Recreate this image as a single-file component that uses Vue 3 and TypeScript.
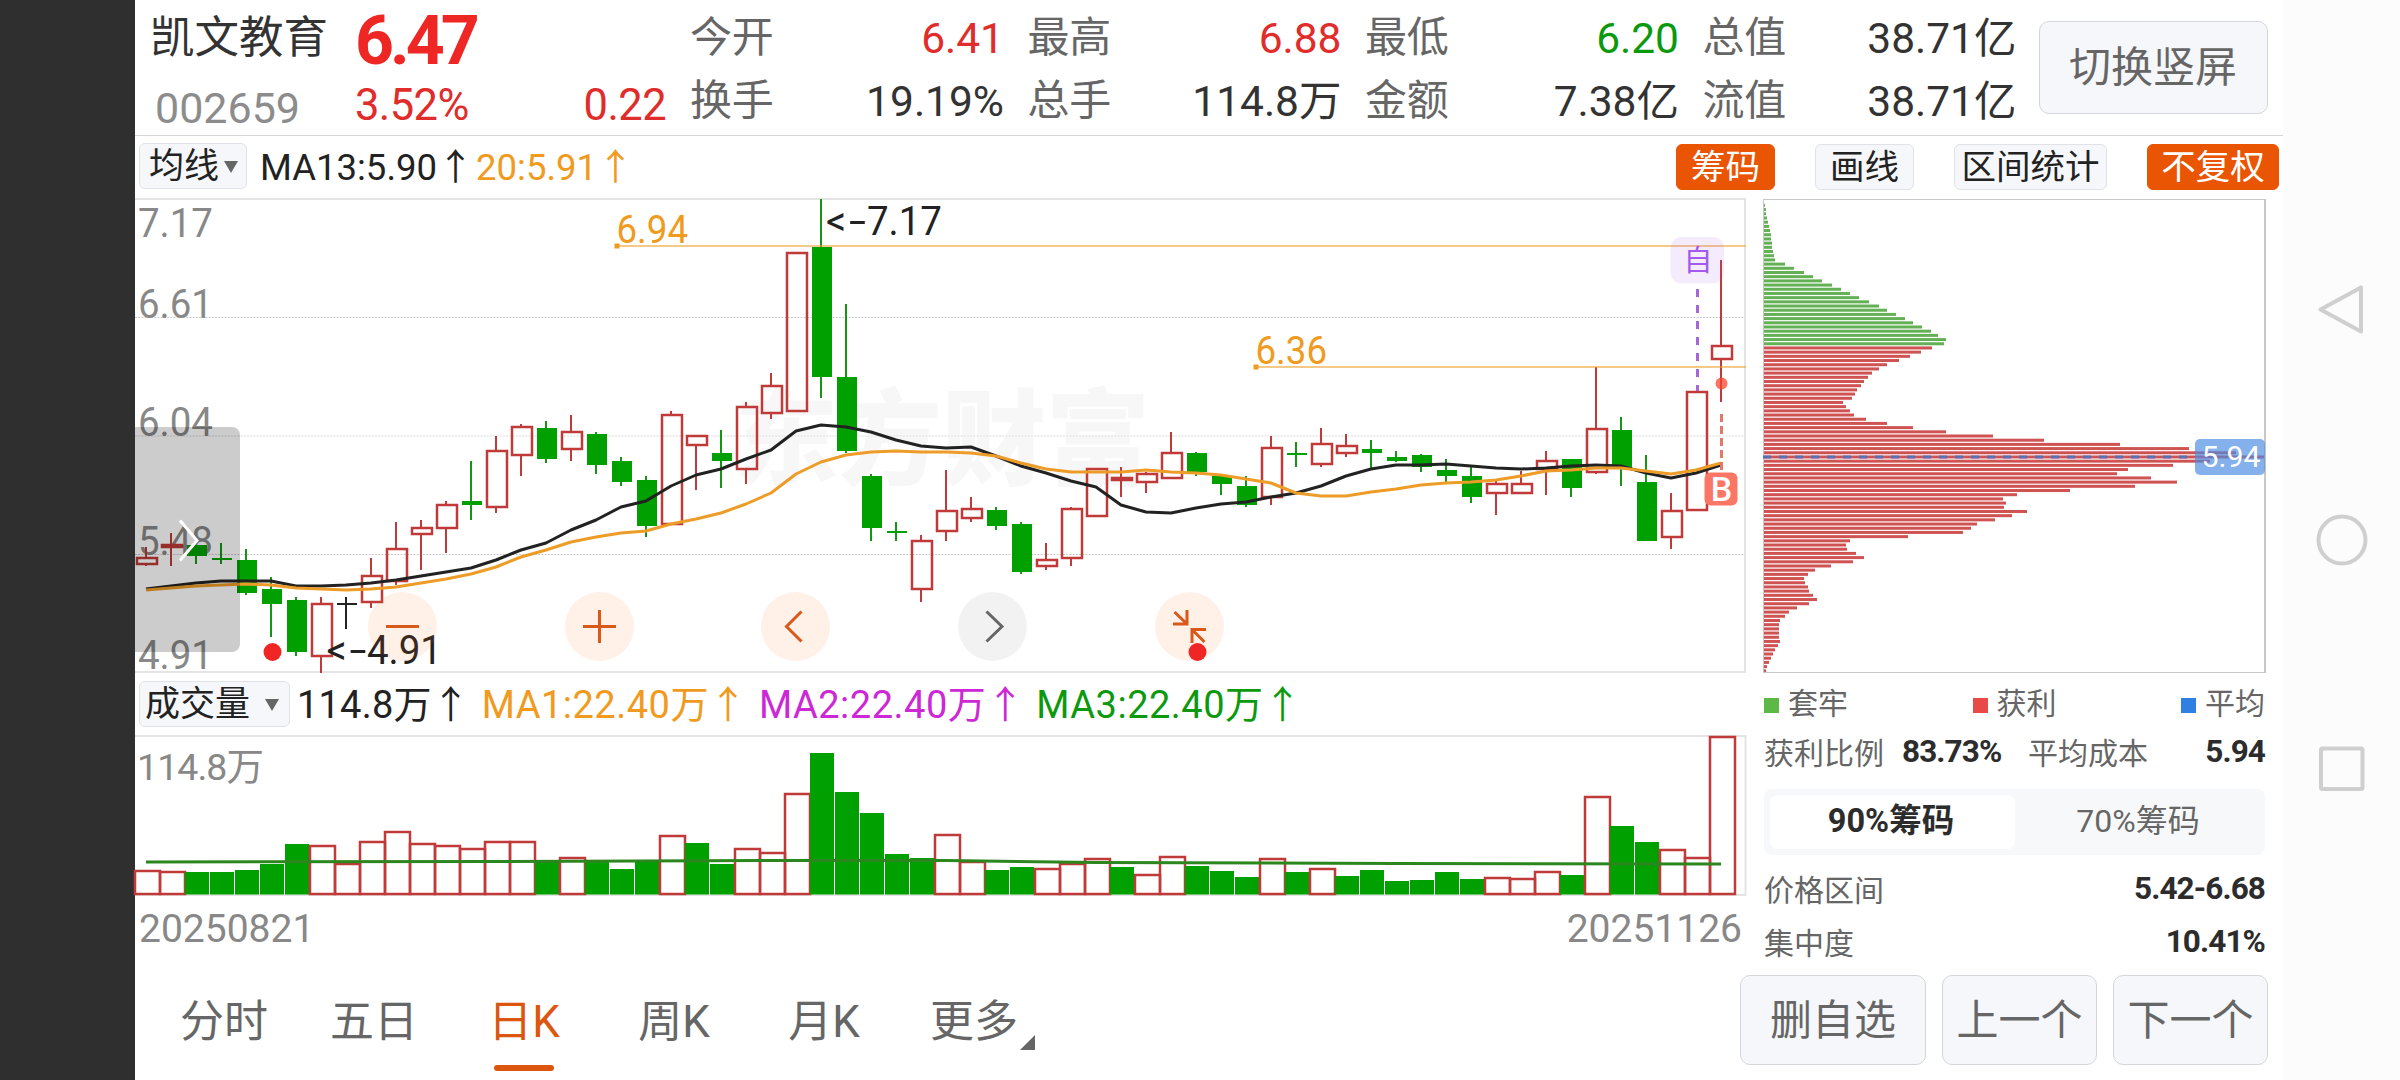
<script setup lang="ts">
type Tone = 'r' | 'g' | 'k'
type Candle = [Tone, number, number, number, number]

const STEP = 25
const FIRST = 146

// tone, high, body top, body bottom, low
const candles: Candle[] = [
  ['r', 547, 557, 565, 566], ['r', 533, 544, 548, 566], ['g', 545, 545, 556, 564], ['g', 543, 558, 560, 564],
  ['g', 549, 560, 593, 595], ['g', 577, 589, 604, 637], ['g', 597, 600, 652, 656], ['r', 597, 603, 657, 673],
  ['k', 597, 603, 605, 629], ['r', 558, 575, 603, 608], ['r', 522, 548, 582, 585], ['r', 520, 527, 535, 570],
  ['r', 501, 504, 529, 553], ['g', 461, 501, 505, 520], ['r', 436, 450, 508, 513], ['r', 424, 426, 456, 476],
  ['g', 421, 428, 459, 463], ['r', 415, 431, 450, 461], ['g', 432, 434, 465, 474], ['g', 457, 461, 482, 486],
  ['g', 476, 480, 526, 537], ['r', 411, 414, 525, 525], ['r', 435, 435, 446, 490], ['g', 430, 453, 461, 488],
  ['r', 402, 406, 470, 484], ['r', 373, 385, 414, 419], ['r', 252, 252, 412, 412], ['g', 199, 247, 377, 398],
  ['g', 304, 377, 451, 453], ['g', 474, 476, 528, 541], ['g', 522, 531, 533, 541], ['r', 535, 540, 590, 602],
  ['r', 470, 510, 532, 541], ['r', 497, 508, 519, 522], ['g', 507, 510, 526, 530], ['g', 522, 524, 572, 574],
  ['r', 543, 559, 567, 570], ['r', 507, 508, 559, 566], ['r', 468, 468, 517, 517], ['r', 467, 477, 481, 497],
  ['r', 472, 473, 483, 493], ['r', 432, 452, 479, 479], ['g', 452, 453, 472, 476], ['g', 474, 476, 484, 495],
  ['g', 476, 486, 505, 507], ['r', 436, 447, 498, 505], ['g', 442, 453, 455, 467], ['r', 428, 443, 465, 467],
  ['r', 434, 445, 454, 457], ['g', 440, 449, 453, 468], ['g', 451, 457, 461, 462], ['g', 454, 455, 467, 472],
  ['g', 459, 470, 476, 483], ['g', 467, 476, 497, 503], ['r', 480, 483, 494, 515], ['r', 471, 483, 494, 494],
  ['r', 451, 460, 470, 495], ['g', 459, 459, 488, 497], ['r', 367, 428, 473, 474], ['g', 417, 430, 469, 486],
  ['g', 455, 482, 541, 541], ['r', 493, 510, 538, 549], ['r', 391, 391, 511, 511], ['r', 260, 345, 360, 402],
]

const ma13: number[] = [
  589, 586, 583, 581, 581, 581, 586, 586, 585, 583, 580, 576, 572, 568, 560, 550, 543, 530, 520, 507, 501, 486, 475, 469,
  459, 450, 431, 425, 427, 432, 440, 446, 448, 447, 456, 466, 473, 481, 487, 505, 512, 513, 508, 504, 502, 497, 493, 486,
  476, 469, 465, 465, 464, 466, 468, 469, 468, 466, 465, 466, 473, 478, 473, 465,
]
const ma20: number[] = [
  590, 588, 586, 585, 584, 585, 588, 589, 590, 589, 587, 583, 579, 574, 567, 557, 550, 542, 537, 533, 531, 524, 519, 513,
  504, 493, 474, 462, 455, 452, 451, 452, 452, 453, 456, 463, 469, 472, 472, 472, 470, 472, 473, 475, 479, 483, 493, 496,
  496, 492, 489, 485, 483, 482, 480, 476, 471, 470, 468, 468, 471, 474, 470, 463,
]
const toPoints = (ys: number[]): string => ys.map((y, i) => `${FIRST + i * STEP},${y}`).join(' ')

const volTops: number[] = [
  871, 872, 872, 872, 870, 864, 844, 846, 864, 842, 832, 844, 846, 849, 842, 842, 860, 858, 860, 869, 860, 836, 843, 864,
  849, 853, 794, 753, 792, 813, 854, 858, 835, 862, 870, 867, 869, 864, 859, 867, 875, 857, 866, 871, 877, 859, 872, 869,
  876, 870, 881, 880, 872, 879, 878, 879, 872, 875, 797, 826, 842, 850, 858, 737,
]
const greenVolumes = new Set<number>([
  2, 3, 4, 5, 6, 16, 18, 19, 20, 22, 23, 27, 28, 29, 30, 31, 34, 35, 39, 42, 43, 44, 46, 48, 49, 50, 51, 52, 53, 57, 59, 60,
])
const volTone = (i: number): Tone => (greenVolumes.has(i) ? 'g' : 'r')

const trapped: number[] = [
  1, 2, 2, 3, 4, 5, 6, 7, 7, 8, 8, 9, 10, 11, 21, 30, 40, 49, 58, 68, 77, 86, 95, 105, 115, 123, 132, 141, 149, 158, 167,
  174, 182, 180,
]
const profit: number[] = [
  168, 157, 146, 135, 123, 115, 108, 104, 100, 97, 93, 91, 88, 79, 82, 86, 90, 102, 123, 149, 182, 229, 280, 356, 425,
  472, 501, 446, 409, 364, 353, 387, 413, 371, 306, 253, 239, 242, 240, 263, 248, 231, 213, 207, 199, 144, 86, 82, 83, 92,
  100, 89, 67, 51, 44, 40, 41, 44, 45, 49, 53, 45, 33, 25, 21, 16, 15, 15, 15, 15, 16, 14, 11, 9, 7, 5, 3, 2,
]
const chips = [...trapped.map((w) => ({ w, c: 'g' })), ...profit.map((w) => ({ w, c: 'r' }))]
const chipStep = 465.4 / (chips.length - 1)

const quotes = [
  { k: '今开', v: '6.41', c: 'up' }, { k: '最高', v: '6.88', c: 'up' }, { k: '最低', v: '6.20', c: 'down' }, { k: '总值', v: '38.71亿', c: '' },
  { k: '换手', v: '19.19%', c: '' }, { k: '总手', v: '114.8万', c: '' }, { k: '金额', v: '7.38亿', c: '' }, { k: '流值', v: '38.71亿', c: '' },
]
const axis = [
  { t: '7.17', y: 237 }, { t: '6.61', y: 318 }, { t: '6.04', y: 436 }, { t: '5.48', y: 554.5 }, { t: '4.91', y: 669 },
]
const tabs = ['分时', '五日', '日K', '周K', '月K', '更多']
</script>

<template>
  <div class="screen">
    <div class="edge"></div>
    <main class="app">
      <header class="head">
        <div class="ident">
          <div class="name">凯文教育</div>
          <div class="code">002659</div>
        </div>
        <div class="price">
          <div class="last">6.47</div>
          <div class="delta"><span>3.52%</span><span>0.22</span></div>
        </div>
        <div class="quotes">
          <div v-for="(q, i) in quotes" :key="i" class="quote">
            <span class="k">{{ q.k }}</span><span class="v" :class="q.c">{{ q.v }}</span>
          </div>
        </div>
        <button class="btn rotate">切换竖屏</button>
      </header>

      <div class="tools">
        <div class="pick ma">均线<i class="tri"></i></div>
        <div class="legend"><span>MA13:5.90<b>↑</b></span><span class="orange">20:5.91<b>↑</b></span></div>
        <div class="chips-btn">
          <span class="tool on">筹码</span><span class="tool">画线</span><span class="tool wide">区间统计</span><span class="tool on last3">不复权</span>
        </div>
      </div>

      <div class="body">
        <section class="left">
          <svg class="plot" width="1612" height="475" viewBox="135 198 1612 475">
            <text class="mark" x="734" y="477" textLength="416">东方财富</text>
            <g class="frame">
              <path d="M135 199H1745V672H135" />
            </g>
            <g class="grid">
              <path d="M135 317.5H1745M135 554.5H1745" />
              <path class="mid" d="M135 436H1745" />
            </g>
            <text v-for="a in axis" :key="a.t" class="axis" x="138" :y="a.y" textLength="75" lengthAdjust="spacingAndGlyphs">{{ a.t }}</text>

            <g v-for="(c, i) in candles" :key="i" :class="['c', c[0]]">
              <rect v-if="c[1] < c[2]" class="w" :x="FIRST - 1 + i * STEP" :y="c[1]" width="2" :height="c[2] - c[1]" />
              <rect v-if="c[4] > c[3]" class="w" :x="FIRST - 1 + i * STEP" :y="c[3]" width="2" :height="c[4] - c[3]" />
              <rect v-if="c[0] === 'r'" class="hollow" :x="FIRST - 9 + i * STEP" :y="c[2] + 1" width="20" :height="c[3] - c[2] - 2" />
              <rect v-else :x="FIRST - 9 + i * STEP" :y="c[2]" width="20" :height="c[3] - c[2]" />
            </g>

            <polyline class="line dark" :points="toPoints(ma13)" />
            <polyline class="line amber" :points="toPoints(ma20)" />

            <g class="level">
              <path d="M617 246H1746M1256 367H1746" />
              <rect x="614.5" y="243.5" width="5" height="5" /><rect x="1253.5" y="364.5" width="5" height="5" />
              <text x="616.5" y="242.5" textLength="71.500" lengthAdjust="spacingAndGlyphs">6.94</text>
              <text x="1255.5" y="363.5" textLength="71.500" lengthAdjust="spacingAndGlyphs">6.36</text>
            </g>

            <g class="note">
              <text x="826" y="235">&lt;</text>
              <text x="849" y="235" textLength="17" lengthAdjust="spacingAndGlyphs">-</text>
              <text x="867" y="235" textLength="75" lengthAdjust="spacingAndGlyphs">7.17</text>
              <text x="326.500" y="664">&lt;</text>
              <text x="349.500" y="664" textLength="17" lengthAdjust="spacingAndGlyphs">-</text>
              <text x="367" y="664" textLength="75" lengthAdjust="spacingAndGlyphs">4.91</text>
            </g>

            <rect class="self-bg" x="1670.5" y="237" width="53.500" height="46.500" rx="11" />
            <text class="self" x="1698" y="270.500" text-anchor="middle">自</text>
            <path class="self-line" d="M1697.500 289V391" />
            <path class="buy-line" d="M1721.500 414V470" />
            <circle class="buy-dot" cx="1721.500" cy="383.500" r="6" />
            <rect class="buy-bg" x="1704.500" y="472.500" width="33" height="33" rx="6" />
            <text class="buy" x="1721.500" y="501" text-anchor="middle">B</text>

            <g class="ctl">
              <circle cx="402.500" cy="626.500" r="34.500" /><circle cx="599.500" cy="626.500" r="34.500" />
              <circle cx="795.500" cy="626.500" r="34.500" /><circle class="off" cx="992.500" cy="626.500" r="34.500" />
              <circle cx="1189.500" cy="626.500" r="34.500" />
              <path d="M386 626.500H419M583 626.500H616M599.500 610V643" />
              <path d="M801.500 611.500L786.500 626.500L801.500 641.500" />
              <path class="off" d="M986.500 611.500L1002 626.500L986.500 641.500" />
              <path d="M1174.500 612L1187 624M1187 610V624H1173M1204.500 642L1192 629.500M1192 643V629.500H1206" />
            </g>
            <circle class="dot" cx="272.500" cy="652" r="9" /><circle class="dot" cx="1197.500" cy="652" r="9" />

            <path class="drawer" d="M135 427H232a8 8 0 0 1 8 8V644a8 8 0 0 1 -8 8H135Z" />
            <path class="drawer-arrow" d="M180 520.500L197 540.500L180 560.500" />
          </svg>

          <div class="vol-head">
            <div class="pick vol">成交量<i class="tri"></i></div>
            <div class="legend big">
              <span class="now">114.8万<b>↑</b></span><span class="orange">MA1:22.40万<b>↑</b></span>
              <span class="violet">MA2:22.40万<b>↑</b></span><span class="green">MA3:22.40万<b>↑</b></span>
            </div>
          </div>

          <svg class="plot" width="1612" height="161" viewBox="135 735 1612 161">
            <path class="vframe" d="M135 736H1745.500V895H135" />
            <text class="vaxis" x="137" y="779.500" textLength="127">114.8万</text>
            <g v-for="(y, i) in volTops" :key="i" :class="['c', volTone(i)]">
              <rect v-if="volTone(i) === 'r'" class="hollow" :x="135 + i * STEP" :y="y" width="25" :height="894 - y" />
              <rect v-else :x="135 + i * STEP" :y="y" width="24" :height="894.500 - y" />
            </g>
            <polyline class="line vma" points="146,862 500,861.500 796,860.500 946,860.500 1096,862.500 1396,863.500 1721,864" />
          </svg>

          <div class="dates"><span>20250821</span><span>20251126</span></div>
        </section>

        <section class="right">
          <svg class="chip" width="504" height="475" viewBox="1763 198 504 475">
            <rect v-for="(b, i) in chips" :key="i" :class="'b' + b.c" x="1764" :y="203.900 + i * chipStep" :width="b.w" height="3" />
            <path class="cframe" d="M1763 199.500H2265M1763.500 199V673M1763 672.500H2265" />
            <path class="cframe thick" d="M2265 199V673" />
            <path class="avg" d="M1763 457H2190" />
            <rect class="avg-bg" x="2195" y="439" width="70" height="36" rx="5" />
            <text class="avg-t" x="2201.500" y="467" textLength="59" lengthAdjust="spacingAndGlyphs">5.94</text>
          </svg>
          <div class="keys">
            <span><i class="sq g"></i>套牢</span><span><i class="sq r"></i>获利</span><span><i class="sq b"></i>平均</span>
          </div>
          <div class="stat"><span>获利比例</span><b class="ratio">83.73%</b><span class="cost">平均成本</span><b class="push">5.94</b></div>
          <div class="seg"><span class="act">90%筹码</span><span>70%筹码</span></div>
          <div class="stat s2"><span>价格区间</span><b class="push">5.42-6.68</b></div>
          <div class="stat s3"><span>集中度</span><b class="push">10.41%</b></div>
        </section>
      </div>

      <footer class="foot">
        <nav class="tabs">
          <div v-for="t in tabs" :key="t" class="tab" :class="{ sel: t === '日K' }">
            {{ t }}<i v-if="t === '更多'" class="corner"></i>
          </div>
        </nav>
        <div class="acts">
          <button class="btn a1">删自选</button><button class="btn a2">上一个</button><button class="btn a2">下一个</button>
        </div>
      </footer>
    </main>

    <aside class="sysnav">
      <svg width="117" height="1080" viewBox="2283 0 117 1080">
        <path d="M2361 287.500V331.500L2320.500 309.500Z" />
        <circle cx="2342" cy="540" r="23.500" />
        <rect x="2321" y="748.500" width="41.500" height="40.500" rx="1.500" />
      </svg>
    </aside>
  </div>
</template>

<style>
html, body { margin: 0; background: #fff; overflow: hidden; }
</style>

<style scoped>
.screen {
  display: flex; width: 2400px; height: 1080px; background: #fff; overflow: hidden;
  font-family: Roboto, "Noto Sans CJK SC", sans-serif; color: #333; white-space: nowrap;
}
.edge { width: 135px; background: #2f2f2f; flex: none; }
.app { width: 2148px; flex: none; display: flex; flex-direction: column; }
.sysnav { width: 117px; background: #fcfcfc; }
.sysnav svg { display: block; fill: none; stroke: #cfcfcf; stroke-width: 4; stroke-linejoin: round; }
i { font-style: normal; }

.head { height: 135px; border-bottom: 1px solid #d6d6d6; display: flex; box-sizing: content-box; }
.ident { width: 220px; padding-left: 15px; box-sizing: border-box; flex: none; }
.name { font-size: 44.500px; line-height: 76px; height: 74px; }
.code { font-size: 43px; line-height: 68px; padding-left: 5px; color: #8c8c8c; }
.price { width: 311px; flex: none; color: #ee2624; }
.last { font-size: 68px; font-weight: 700; line-height: 82px; height: 72px; letter-spacing: -4px; }
.delta { display: flex; justify-content: space-between; font-size: 43.500px; line-height: 68px; color: #e02c2a; letter-spacing: -0.600px; }
.quotes { margin-left: 24px; display: grid; grid-template-columns: repeat(4, 314px); column-gap: 23.500px; grid-auto-rows: 63px; padding-top: 6px; }
.quote { display: flex; justify-content: space-between; align-items: center; font-size: 42px; line-height: 64px; }
.k { color: #666; letter-spacing: -0.300px; }
.up { color: #e02c2a; }
.down { color: #0d990d; }
.quote .v { font-size: 42.500px; padding-top: 2px; }
.btn {
  display: flex; align-items: center; justify-content: center; padding: 0; box-sizing: border-box; flex: none;
  border: 1px solid #d3d7da; border-radius: 10px; background: #f6f7fa; color: #666; font: 42px/1 Roboto, "Noto Sans CJK SC", sans-serif;
}
.rotate { width: 229px; height: 93px; margin: 21px 0 0 22px; }

.tools { height: 62px; display: flex; align-items: flex-start; position: relative; }
.pick {
  height: 46px; box-sizing: border-box; border: 1px solid #dfe2e6; border-radius: 6px; background: #f6f7fa; color: #222;
  display: flex; align-items: center; font-size: 35px; line-height: 44px; flex: none;
}
.tri { width: 0; height: 0; border: 7px solid transparent; border-top: 12px solid #666; border-bottom: 0; }
.ma { width: 108px; margin: 7px 0 0 4px; padding: 2px 0 0 9px; }
.ma .tri { margin-left: 5px; }
.legend { display: flex; margin: 9px 0 0 13px; font-size: 36.500px; line-height: 46px; gap: 2px; color: #222; }
.legend b { font-weight: 400; display: inline-block; width: 37px; text-align: center; font-family: "Noto Sans CJK SC", sans-serif; line-height: 30px; }
.legend .orange { color: #f09a1e; }
.violet { color: #cc28d6; }
.legend .green { color: #0d990d; }
.chips-btn { margin-left: auto; display: flex; gap: 40px; padding: 8px 4px 0 0; }
.tool {
  width: 99px; height: 46px; box-sizing: border-box; border: 1px solid #dfe2e6; border-radius: 6px; background: #f6f7fa; color: #222;
  font-size: 34.500px; line-height: 45px; text-align: center;
}
.tool.wide { width: 153px; }
.tool.on { background: #ea5504; border-color: #ea5504; color: #fff; }
.tool.last3 { width: 132px; }

.body { display: flex; height: 777px; }
.left { width: 1612px; flex: none; }
.plot { display: block; overflow: visible; }
.frame path, .vframe { fill: none; stroke: #e4e4e4; stroke-width: 2; }
.grid path { stroke: #c9c9c9; stroke-width: 1; stroke-dasharray: 2 1.200; }
.grid .mid { stroke: #ececec; stroke-width: 2; }
.mark { font: 900 104px "Noto Sans CJK SC", sans-serif; fill: #f7f7f7; }
.axis { font-size: 40px; fill: #888; }
.vaxis { font-size: 37.500px; fill: #888; }
.c.r { fill: #bf3a38; }
.c.g { fill: #00a000; }
.c.g .w { fill: #149614; }
.c.k { fill: #222; }
.c .hollow { fill: none; stroke: #bf3a38; stroke-width: 2.500; }
.line { fill: none; stroke-width: 3; stroke-linejoin: round; }
.dark { stroke: #222; }
.amber { stroke: #ee9c28; }
.vma { stroke: #2c861e; stroke-width: 3; }
.level path { stroke: #ee9c28; stroke-opacity: 0.550; stroke-width: 2; }
.level rect, .level text { fill: #f09a1e; }
.level text { font-size: 38px; }
.note text { font-size: 40px; fill: #222; }
.self-bg { fill: #a259ec; fill-opacity: 0.120; }
.self { font-size: 29px; fill: #a259ec; }
.self-line { stroke: #a468d6; stroke-width: 3; stroke-dasharray: 8; }
.buy-line { stroke: #e2776b; stroke-width: 3; stroke-dasharray: 8 4; }
.buy-dot { fill: #f9442e; fill-opacity: 0.750; }
.buy-bg { fill: #fb7765; }
.buy { font-size: 34px; font-weight: 500; fill: #fff; }
.ctl circle { fill: #ff6a20; fill-opacity: 0.100; }
.ctl circle.off { fill: #000; fill-opacity: 0.050; }
.ctl path { fill: none; stroke: #d9591a; stroke-width: 3; }
.ctl path.off { stroke: #666; }
.dot { fill: #f02626; }
.drawer { fill: #000; fill-opacity: 0.200; }
.drawer-arrow { fill: none; stroke: #fff; stroke-width: 3; }

.vol-head { height: 62px; display: flex; align-items: flex-start; }
.vol { width: 151px; margin: 8px 0 0 4px; padding: 1px 0 0 5px; }
.vol .tri { margin-left: 15px; }
.legend.big { font-size: 38px; line-height: 46px; margin: 9px 0 0 7px; gap: 12px; letter-spacing: 0.500px; }
.legend.big .now { letter-spacing: 0.200px; }
.legend.big b { width: 38px; }
.dates { display: flex; justify-content: space-between; padding: 0 5px 0 4px; font-size: 39px; line-height: 66px; color: #888; }

.right { width: 504px; margin-left: 16px; display: flex; flex-direction: column; }
.chip { display: block; flex: none; overflow: visible; }
.bg { fill: #64b054; }
.br { fill: #d05353; }
.cframe { fill: none; stroke: #c8c8c8; stroke-width: 1; }
.cframe.thick { stroke-width: 2; }
.avg { stroke: #5470b8; stroke-width: 3; stroke-dasharray: 8; }
.avg-bg { fill: #4a8ae2; fill-opacity: 0.680; }
.avg-t { font-size: 30px; fill: #fff; }
.keys { display: flex; justify-content: space-between; padding-right: 2px; margin-top: 9px; font-size: 30px; line-height: 44px; color: #666; }
.keys span { display: flex; align-items: center; }
.sq { width: 15px; height: 15px; margin: 2px 9px 0 1px; }
.sq.g { background: #5cb947; }
.sq.r { background: #e84a48; }
.sq.b { background: #3080e4; }
.stat { display: flex; align-items: center; height: 44px; margin-top: 3px; padding-left: 1px; font-size: 30px; color: #666; flex: none; width: 502px; box-sizing: border-box; }
.stat b { font-weight: 700; color: #2c2c2c; font-size: 31.500px; letter-spacing: -0.900px; padding-top: 1px; }
.ratio { margin-left: 18px; width: 98px; }
.cost { margin-left: 28px; }
.push { margin-left: auto; }
.seg { width: 501px; height: 66px; box-sizing: border-box; margin: 16px 0 0 1px; padding: 6px; background: #f7f8fa; border-radius: 8px; display: flex; font-size: 32px; line-height: 53px; color: #666; flex: none; }
.seg span { flex: 1; text-align: center; height: 54px; border-radius: 8px; padding-left: 2px; }
.seg .act { background: #fff; color: #2c2c2c; font-weight: 700; font-size: 32.500px; padding: 0 3px 0 0; }
.s2 { margin-top: 11px; }
.s3 { margin-top: 9px; }

.foot { display: flex; justify-content: space-between; height: 105px; }
.tabs { display: flex; padding-left: 14px; font-size: 44px; line-height: 94px; color: #666; }
.tab { width: 150px; text-align: center; position: relative; }
.tab.sel { color: #dd5610; }
.tab.sel::after { content: ""; position: absolute; left: 45px; top: 90px; width: 60px; height: 6px; border-radius: 3px; background: #dd5610; }
.corner { position: absolute; left: 121px; top: 60px; width: 0; height: 0; border-left: 15px solid transparent; border-bottom: 15px solid #666; }
.acts { display: flex; gap: 16px; padding-right: 15px; }
.acts .btn { height: 90px; padding-top: 2px; }
.a1 { width: 186px; }
.a2 { width: 155px; }
</style>
